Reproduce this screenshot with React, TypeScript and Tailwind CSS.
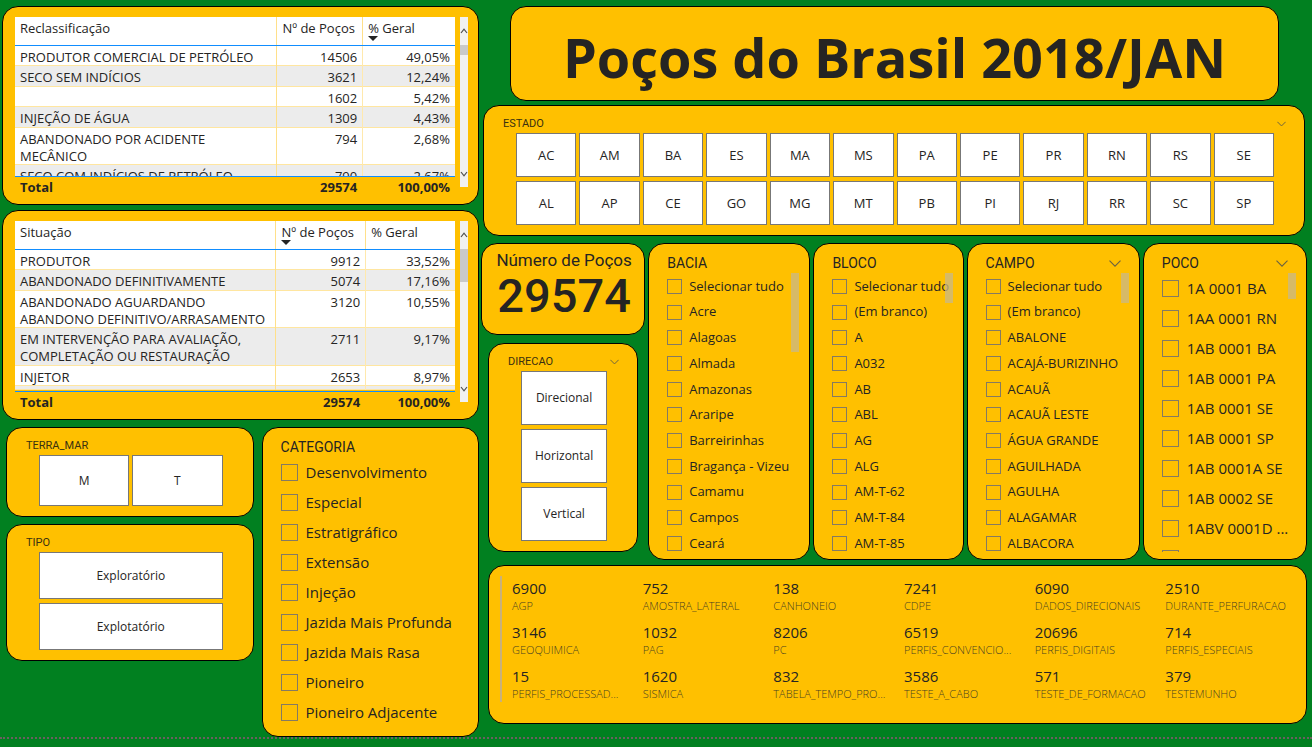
import type { ReactNode } from "react";

const sans = "font-['Open_Sans','Noto_Sans',sans-serif]";
const din = "font-['Roboto','Liberation_Sans',sans-serif]";

function Panel({ className = "", children }: { className?: string; children: ReactNode }) {
  return (
    <section className={`rounded-2xl border border-black bg-[#ffc000] ${className}`}>{children}</section>
  );
}

function Chevron({ small = false }: { small?: boolean }) {
  return (
    <svg
      className={small ? "h-[6px] w-[9px]" : "h-[7px] w-[12px]"}
      viewBox="0 0 12 7"
      fill="none"
      stroke="#6b6240"
      strokeWidth={small ? 1.3 : 1.1}
      aria-hidden="true"
    >
      <path d="M0.5 0.6 6 6.1 11.5 0.6" />
    </svg>
  );
}

type Row = [string, string, string];

interface GridProps {
  heading: string;
  rows: Row[];
  columns: string;
  bodyHeight: string;
  trackHeight: string;
  thumbHeight: string;
  sorted: 1 | 2;
}

function SortMark() {
  return (
    <svg className="absolute top-[19px] left-[5px] h-[5px] w-[10px]" viewBox="0 0 10 5" aria-hidden="true">
      <path d="M0 0h10L5 5z" fill="#252423" />
    </svg>
  );
}

function ScrollArrow({ up = false }: { up?: boolean }) {
  return (
    <svg className="h-[6px] w-[8px]" viewBox="0 0 8 6" fill="none" stroke="#505050" strokeWidth="1.2" aria-hidden="true">
      <path d={up ? "M1 5 4 1.2 7 5" : "M1 1 4 4.8 7 1"} />
    </svg>
  );
}

function DataGrid({ heading, rows, columns, bodyHeight, trackHeight, thumbHeight, sorted }: GridProps) {
  const heads = [heading, "Nº de Poços", "% Geral"];
  return (
    <div className="flex gap-[5px] pt-[10px] pr-[10px] pb-[8px] pl-[12px]">
      <table className={`block min-w-0 flex-1 text-[13px] leading-[17px] text-[#252423] ${sans}`}>
        <thead className="block">
          <tr className={`grid h-[29px] border-b border-[#118dff] bg-white ${columns}`}>
            {heads.map((head, i) => (
              <th
                key={head}
                scope="col"
                className={`relative pt-[3px] pl-[5px] text-left font-normal whitespace-nowrap ${i > 0 ? "border-l border-[#ffe08a]" : ""}`}
              >
                {head}
                {sorted === i && <SortMark />}
              </th>
            ))}
          </tr>
        </thead>
        <tbody className={`block overflow-hidden border-b border-[#118dff] ${bodyHeight}`}>
          {rows.map((row, r) => (
            <tr
              key={r}
              className={`grid shadow-[inset_0_-1px_0_#ffe6a0] *:pt-[3px] ${columns} ${r % 2 ? "bg-[#ececec] *:pb-[1px]" : "bg-white"}`}
            >
              <td className="pl-[5px] whitespace-pre-line">{row[0]}</td>
              <td className="border-l border-[#ffe08a] pr-[5px] text-right">{row[1]}</td>
              <td className="border-l border-[#ffe9ad] pr-[5px] text-right">{row[2]}</td>
            </tr>
          ))}
        </tbody>
        <tfoot className="block">
          <tr className={`grid pt-[2px] font-bold ${columns}`}>
            <th scope="row" className="pl-[5px] text-left">Total</th>
            <td className="pr-[5px] text-right">29574</td>
            <td className="pr-[5px] text-right">100,00%</td>
          </tr>
        </tfoot>
      </table>
      <div className={`flex w-[8px] flex-col items-center bg-[#f1f1f1] ${trackHeight}`}>
        <div className="flex h-[28px] w-full items-center justify-center">
          <ScrollArrow up />
        </div>
        <div className={`w-full bg-[#c9c9c9] ${thumbHeight}`} />
        <div className="mt-auto flex h-[27px] items-center">
          <ScrollArrow />
        </div>
      </div>
    </div>
  );
}

function TileSlicer({
  title,
  items,
  grid,
  tile,
  collapsible = false,
}: {
  title: string;
  items: string[];
  grid: string;
  tile: string;
  collapsible?: boolean;
}) {
  return (
    <div className="pt-[10px] pb-[10px]">
      <div className="flex items-center justify-between pr-[18px] pl-[19px]">
        <h2 className={`text-[11px] leading-[16px] font-normal text-[#3a3010] ${din}`}>{title}</h2>
        {collapsible && (
          <button type="button" aria-label={`Opções de ${title}`}>
            <Chevron small />
          </button>
        )}
      </div>
      <div className={`mt-px grid gap-x-[3px] gap-y-[4px] pr-[30px] pl-8 ${grid}`}>
        {items.map((item) => (
          <button
            key={item}
            type="button"
            className={`border border-[#777777] bg-white text-center text-[#252423] ${sans} ${tile}`}
          >
            {item}
          </button>
        ))}
      </div>
    </div>
  );
}

function CheckSlicer({
  title,
  items,
  large = false,
  collapsible = false,
  thumb,
  list = "",
}: {
  title: string;
  items: string[];
  large?: boolean;
  collapsible?: boolean;
  thumb?: string;
  list?: string;
}) {
  return (
    <div className="relative pt-[9px]">
      <div className="flex items-center justify-between px-[18px]">
        <h2 className={`text-[14px] leading-[20px] font-normal text-[#252423] ${din}`}>{title}</h2>
        {collapsible && (
          <button type="button" aria-label={`Opções de ${title}`}>
            <Chevron />
          </button>
        )}
      </div>
      <ul className={`pl-[18px] text-[#252423] ${sans} ${list}`}>
        {items.map((item) => (
          <li key={item}>
            <label
              className={`flex items-center whitespace-nowrap ${large ? "h-[30px] gap-[8px] text-[15px]" : "h-[25px] gap-[7px] text-[13px]"}`}
            >
              <input
                type="checkbox"
                className={`shrink-0 appearance-none border border-[#857a62] ${large ? "size-[17px]" : "size-[15px]"}`}
              />
              {item}
            </label>
          </li>
        ))}
      </ul>
      {thumb && <div className={`absolute top-[29px] right-[10px] w-[8px] bg-[#c8b88a]/75 ${thumb}`} />}
    </div>
  );
}

const reclass: Row[] = [
  ["PRODUTOR COMERCIAL DE PETRÓLEO", "14506", "49,05%"],
  ["SECO SEM INDÍCIOS", "3621", "12,24%"],
  ["", "1602", "5,42%"],
  ["INJEÇÃO DE ÁGUA", "1309", "4,43%"],
  ["ABANDONADO POR ACIDENTE\nMECÂNICO", "794", "2,68%"],
  ["SECO COM INDÍCIOS DE PETRÓLEO", "790", "2,67%"],
];

const situacao: Row[] = [
  ["PRODUTOR", "9912", "33,52%"],
  ["ABANDONADO DEFINITIVAMENTE", "5074", "17,16%"],
  ["ABANDONADO AGUARDANDO\nABANDONO DEFINITIVO/ARRASAMENTO", "3120", "10,55%"],
  ["EM INTERVENÇÃO PARA AVALIAÇÃO,\nCOMPLETAÇÃO OU RESTAURAÇÃO", "2711", "9,17%"],
  ["INJETOR", "2653", "8,97%"],
  ["", "", ""],
];

const estados = [
  "AC", "AM", "BA", "ES", "MA", "MS", "PA", "PE", "PR", "RN", "RS", "SE",
  "AL", "AP", "CE", "GO", "MG", "MT", "PB", "PI", "RJ", "RR", "SC", "SP",
];

const categorias = [
  "Desenvolvimento", "Especial", "Estratigráfico", "Extensão", "Injeção",
  "Jazida Mais Profunda", "Jazida Mais Rasa", "Pioneiro", "Pioneiro Adjacente",
];

const bacias = [
  "Selecionar tudo", "Acre", "Alagoas", "Almada", "Amazonas", "Araripe",
  "Barreirinhas", "Bragança - Vizeu", "Camamu", "Campos", "Ceará",
];

const blocos = [
  "Selecionar tudo", "(Em branco)", "A", "A032", "AB", "ABL", "AG", "ALG",
  "AM-T-62", "AM-T-84", "AM-T-85",
];

const campos = [
  "Selecionar tudo", "(Em branco)", "ABALONE", "ACAJÁ-BURIZINHO", "ACAUÃ", "ACAUÃ LESTE",
  "ÁGUA GRANDE", "AGUILHADA", "AGULHA", "ALAGAMAR", "ALBACORA",
];

const pocos = [
  "1A 0001 BA", "1AA 0001 RN", "1AB 0001 BA", "1AB 0001 PA", "1AB 0001 SE",
  "1AB 0001 SP", "1AB 0001A SE", "1AB 0002 SE", "1ABV 0001D ...", "",
];

const medidas: [string, string][] = [
  ["6900", "AGP"], ["752", "AMOSTRA_LATERAL"], ["138", "CANHONEIO"],
  ["7241", "CDPE"], ["6090", "DADOS_DIRECIONAIS"], ["2510", "DURANTE_PERFURACAO"],
  ["3146", "GEOQUIMICA"], ["1032", "PAG"], ["8206", "PC"],
  ["6519", "PERFIS_CONVENCIO..."], ["20696", "PERFIS_DIGITAIS"], ["714", "PERFIS_ESPECIAIS"],
  ["15", "PERFIS_PROCESSAD..."], ["1620", "SISMICA"], ["832", "TABELA_TEMPO_PRO..."],
  ["3586", "TESTE_A_CABO"], ["571", "TESTE_DE_FORMACAO"], ["379", "TESTEMUNHO"],
];

const shortList = "flex h-[286px] flex-col justify-between pt-px pb-[3px]";

export default function App() {
  return (
    <div className="min-h-screen bg-[#018020]">
      <main className="grid grid-cols-[477fr_826fr] gap-x-[2px] pt-[6px] pr-[5px] pl-[2px]">
        <div className="flex min-w-0 flex-col gap-[5px]">
          <Panel>
            <DataGrid
              heading="Reclassificação"
              rows={reclass}
              columns="grid-cols-[262fr_86fr_93fr]"
              bodyHeight="h-[131px]"
              trackHeight="h-[170px]"
              thumbHeight="h-[10px]"
              sorted={2}
            />
          </Panel>
          <Panel>
            <DataGrid
              heading="Situação"
              rows={situacao}
              columns="grid-cols-[261fr_90fr_90fr]"
              bodyHeight="h-[142px]"
              trackHeight="h-[181px]"
              thumbHeight="h-[33px]"
              sorted={1}
            />
          </Panel>
          <div className="grid grid-cols-[247fr_217fr] items-start gap-[8px] pt-[2px] pl-[4px]">
            <div className="flex flex-col gap-[7px]">
              <Panel>
                <TileSlicer title="TERRA_MAR" items={["M", "T"]} grid="grid-cols-2" tile="h-[51px] text-[12px]" />
              </Panel>
              <Panel>
                <TileSlicer
                  title="TIPO"
                  items={["Exploratório", "Explotatório"]}
                  grid="grid-cols-1"
                  tile="h-[47px] text-[12px]"
                />
              </Panel>
            </div>
            <Panel className="pb-[9px]">
              <CheckSlicer title="CATEGORIA" items={categorias} large />
            </Panel>
          </div>
        </div>

        <div className="min-w-0">
          <Panel className="mr-[28px] ml-[29px] flex h-[95px] items-center justify-center pt-[6px]">
            <h1 className={`text-[54px] leading-[64px] font-bold whitespace-nowrap text-[#252423] ${sans}`}>
              Poços do Brasil 2018/JAN
            </h1>
          </Panel>
          <Panel className="mx-[2px] mt-[4px]">
            <TileSlicer
              title="ESTADO"
              items={estados}
              grid="grid-cols-12"
              tile="h-[44px] pt-px text-[13px]"
              collapsible
            />
          </Panel>

          <div className="mt-[7px] grid grid-cols-[164fr_162fr_150fr_173fr_164fr] gap-x-[3px]">
            <div className="min-w-0">
              <Panel className={`h-[92px] pt-[4px] pl-[2px] text-center text-[#252423] ${din}`}>
                <h2 className="text-[17px] leading-[24px] font-normal">Número de Poços</h2>
                <p className="text-[47px] leading-[48px] font-medium">29574</p>
              </Panel>
              <Panel className="mx-[7px] mt-[8px]">
                <TileSlicer
                  title="DIRECAO"
                  items={["Direcional", "Horizontal", "Vertical"]}
                  grid="grid-cols-1"
                  tile="h-[54px] text-[12px]"
                  collapsible
                />
              </Panel>
            </div>
            <Panel className="min-w-0">
              <CheckSlicer title="BACIA" items={bacias} list={shortList} thumb="h-[79px]" />
            </Panel>
            <Panel className="min-w-0">
              <CheckSlicer title="BLOCO" items={blocos} list={shortList} thumb="h-[30px]" />
            </Panel>
            <Panel className="min-w-0">
              <CheckSlicer title="CAMPO" items={campos} list={shortList} thumb="h-[30px]" collapsible />
            </Panel>
            <Panel className="min-w-0 overflow-hidden">
              <CheckSlicer
                title="POCO"
                items={pocos}
                list="h-[279px] overflow-hidden"
                thumb="h-[26px]"
                large
                collapsible
              />
            </Panel>
          </div>

          <Panel className="mt-[5px] ml-[7px] pt-[10px] pr-[10px] pb-[21px] pl-[11px]">
            <dl className={`grid h-[126px] grid-cols-6 gap-y-[8px] border-l-2 border-[#c9b17a] pt-[2px] pl-[10px] ${sans}`}>
              {medidas.map(([value, name]) => (
                <div key={name} className="flex h-[36px] min-w-0 flex-col-reverse">
                  <dt className="text-[11px] leading-[16px] font-light whitespace-nowrap text-[#4a4220]">{name}</dt>
                  <dd className="text-[15px] leading-[20px] text-[#252423]">{value}</dd>
                </div>
              ))}
            </dl>
          </Panel>
        </div>
      </main>
      <div className="border-t-2 border-dotted border-[#6b6060]" />
    </div>
  );
}
